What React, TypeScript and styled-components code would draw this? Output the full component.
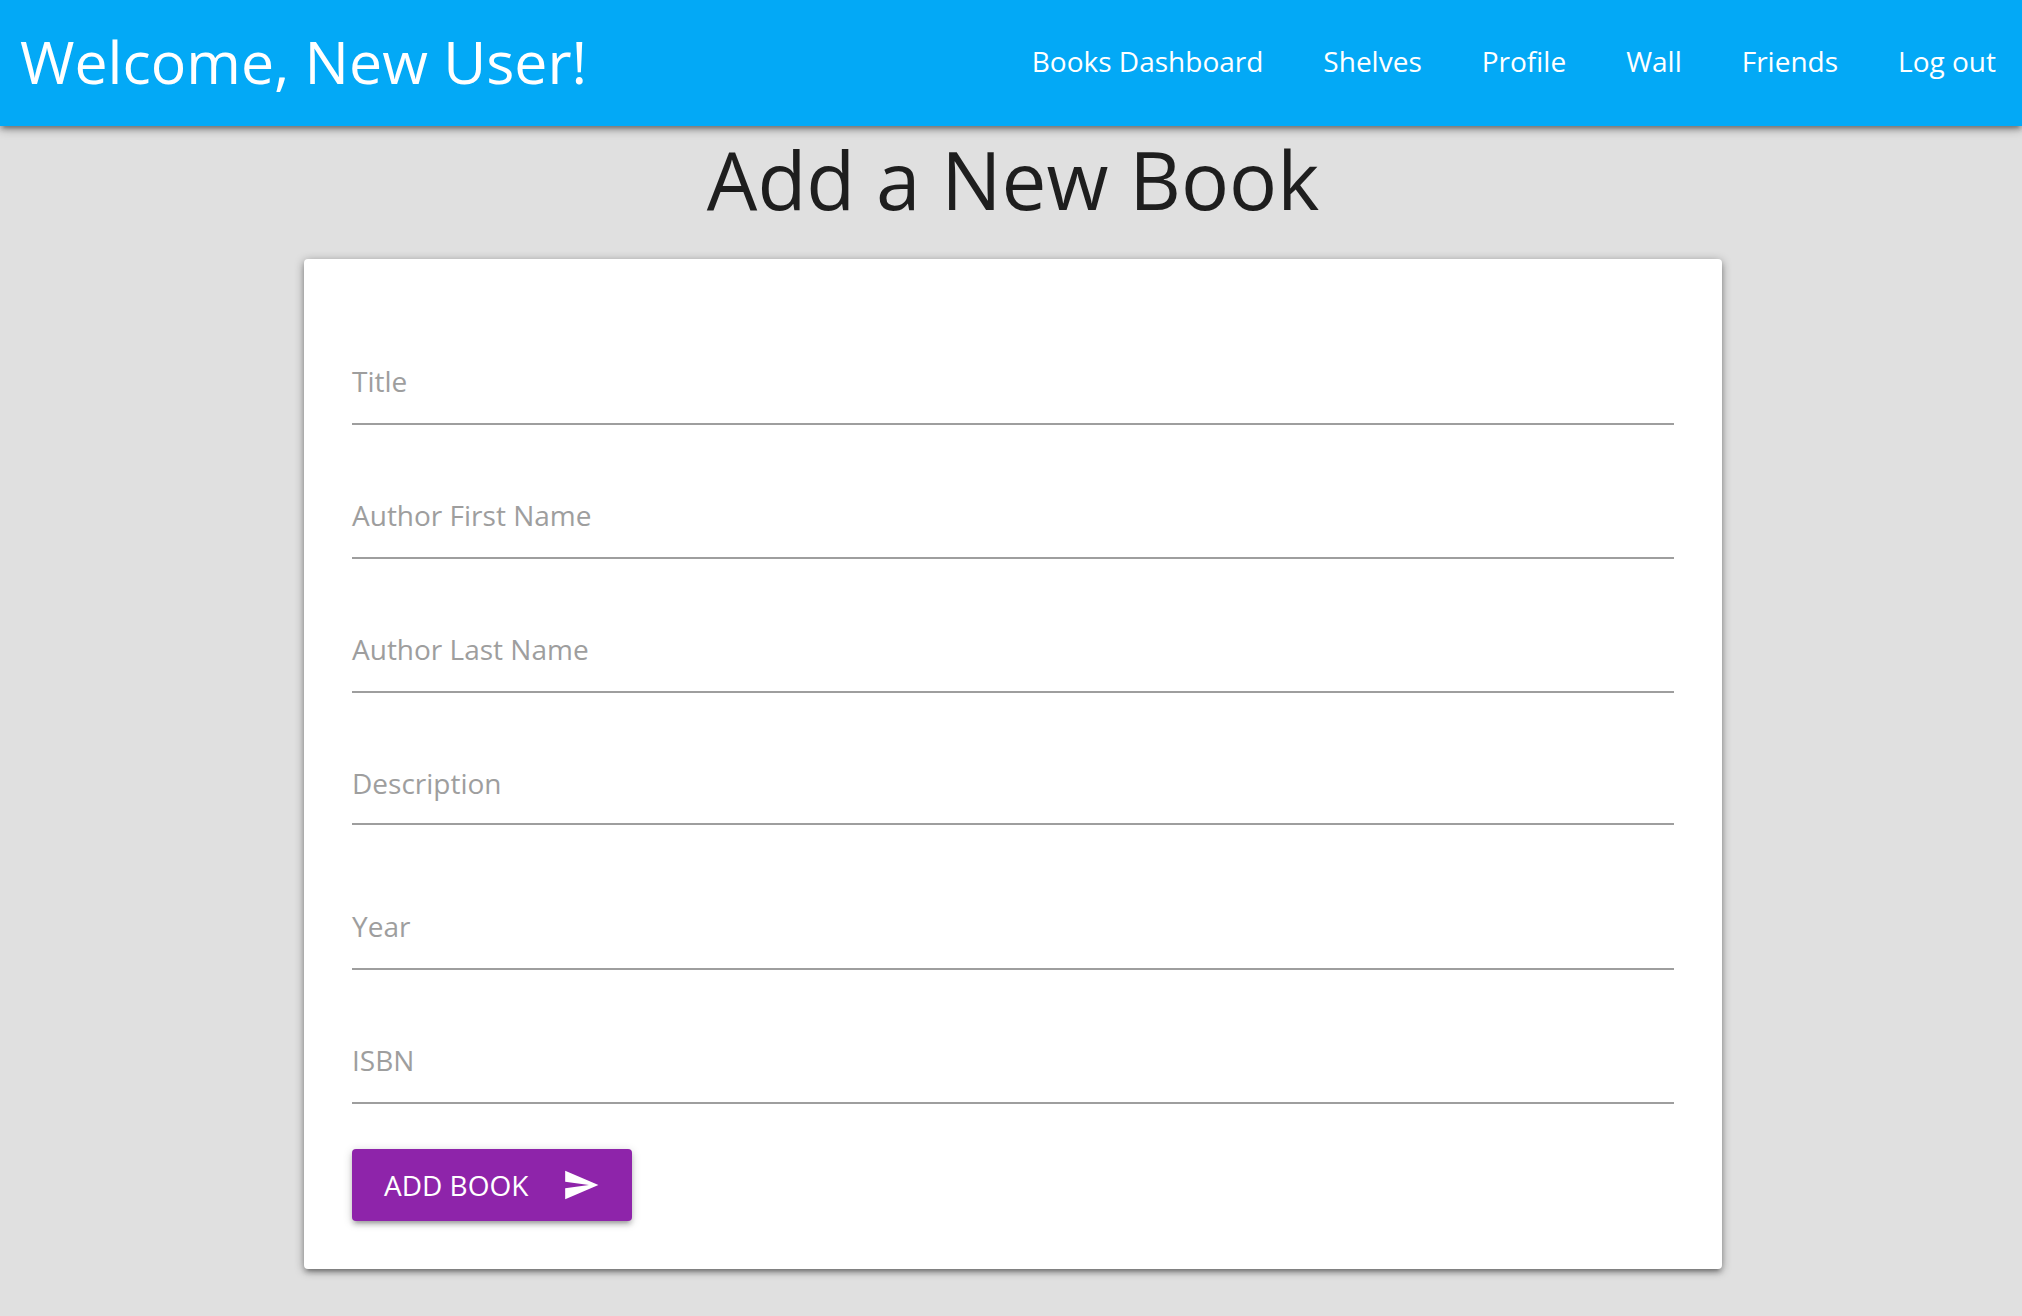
import React from "react";
import styled, { createGlobalStyle } from "styled-components";

const GlobalStyle = createGlobalStyle`
  *, *::before, *::after { box-sizing: border-box; }
  html { background: #e0e0e0; }
  body {
    margin: 0;
    color: #1e1e1e;
    font-family: "Open Sans", "Noto Sans", sans-serif;
    font-size: 28px;
    line-height: 44px;
  }
`;

const liftShadow =
  "0 4px 4px 0 rgba(0,0,0,0.14), 0 6px 2px -4px rgba(0,0,0,0.12), 0 2px 10px 0 rgba(0,0,0,0.2)";
const panelShadow =
  "0 4px 4px 0 rgba(0,0,0,0.14), 0 6px 2px -4px rgba(0,0,0,0.12), 0 2px 10px 0 rgba(0,0,0,0.4)";

const Header = styled.header`
  display: flex;
  flex-wrap: wrap;
  align-items: center;
  justify-content: space-between;
  min-height: 126px;
  padding: 0 26px 4px 20px;
  background: #03a9f6;
  color: #fff;
  box-shadow: ${panelShadow};
`;

const Greeting = styled.span`
  font-size: 59px;
  line-height: 80px;
`;

const Menu = styled.nav`
  display: flex;
  flex-wrap: wrap;
  gap: 0 60px;
`;

const MenuLink = styled.a`
  color: inherit;
  text-decoration: none;
`;

const Page = styled.main`
  padding: 0 300px 44px 304px;
  @media (max-width: 1100px) {
    padding: 0 24px 44px;
  }
`;

const Heading = styled.h1`
  margin: 0;
  padding: 7px 0 34px;
  font-size: 80px;
  font-weight: 400;
  line-height: 92px;
  text-align: center;
`;

const Card = styled.form`
  display: flex;
  flex-direction: column;
  align-items: flex-start;
  gap: 45px;
  padding: 77px 48px 48px;
  border-radius: 4px;
  background: #fff;
  box-shadow: ${panelShadow};
`;

const Field = styled.div<{ $multiline?: boolean }>`
  display: grid;
  width: 100%;
  height: 89px;
  padding-bottom: ${(p) => (p.$multiline ? "2px" : "0")};
  margin-bottom: ${(p) => (p.$multiline ? "9px" : "0")};
  > * {
    grid-area: 1 / 1;
  }
`;

const Label = styled.label`
  align-self: start;
  justify-self: start;
  padding-top: 23px;
  color: #9e9e9e;
  cursor: text;
`;

const controlStyle = `
  width: 100%;
  height: 100%;
  margin: 0;
  padding: 0;
  border: 0;
  border-bottom: 2px solid #9e9e9e;
  border-radius: 0;
  background: transparent;
  color: inherit;
  font: inherit;
  outline: none;
`;

const TextInput = styled.input`
  ${controlStyle}
`;

const TextArea = styled.textarea`
  ${controlStyle}
  padding-top: 23px;
  resize: none;
  overflow: hidden;
`;

const SubmitButton = styled.button`
  display: inline-flex;
  align-items: center;
  gap: 34px;
  height: 72px;
  padding: 0 32px;
  border: 0;
  border-radius: 4px;
  background: #8e24aa;
  color: #fff;
  font: inherit;
  text-transform: uppercase;
  cursor: pointer;
  box-shadow: ${liftShadow};
`;

const links = ["Books Dashboard", "Shelves", "Profile", "Wall", "Friends", "Log out"];

const fields = [
  { id: "title", label: "Title" },
  { id: "first-name", label: "Author First Name" },
  { id: "last-name", label: "Author Last Name" },
  { id: "description", label: "Description", multiline: true },
  { id: "year", label: "Year" },
  { id: "isbn", label: "ISBN" },
];

const SendIcon = () => (
  <svg width="38" height="38" viewBox="0 0 24 24" fill="currentColor" aria-hidden="true">
    <path d="M2.01 21L23 12 2.01 3 2 10l15 2-15 2z" />
  </svg>
);

export default function App() {
  return (
    <>
      <GlobalStyle />
      <Header>
        <Greeting>Welcome, New User!</Greeting>
        <Menu>
          {links.map((text) => (
            <MenuLink key={text} href="#">
              {text}
            </MenuLink>
          ))}
        </Menu>
      </Header>
      <Page>
        <Heading>Add a New Book</Heading>
        <Card onSubmit={(event) => event.preventDefault()}>
          {fields.map(({ id, label, multiline }) => (
            <Field key={id} $multiline={multiline}>
              <Label htmlFor={id}>{label}</Label>
              {multiline ? <TextArea id={id} name={id} /> : <TextInput id={id} name={id} type="text" />}
            </Field>
          ))}
          <SubmitButton type="submit">
            Add Book
            <SendIcon />
          </SubmitButton>
        </Card>
      </Page>
    </>
  );
}
